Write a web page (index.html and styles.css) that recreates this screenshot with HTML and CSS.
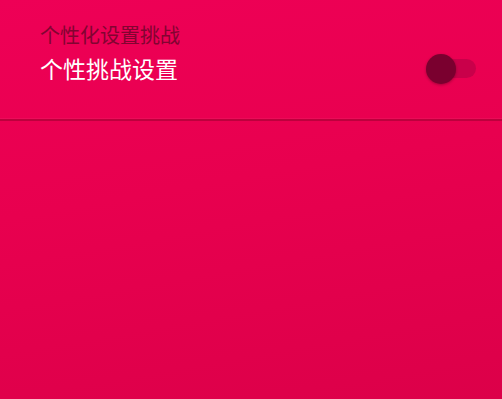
FILE: index.html
```html
<!DOCTYPE html>
<html lang="zh">
<head>
<meta charset="utf-8">
<link rel="stylesheet" href="styles.css">
</head>
<body>
<div class="page">
  <header class="header">
    <div class="texts">
      <div class="caption">个性化设置挑战</div>
      <div class="title">个性挑战设置</div>
    </div>
    <div class="switch">
      <div class="track"></div>
      <div class="thumb"></div>
    </div>
  </header>
  <div class="divider"></div>
</div>
</body>
</html>
```
FILE: styles.css
```css
html, body {
  margin: 0;
  padding: 0;
  height: 100%;
}
body {
  background: linear-gradient(170deg, #ee0056 0%, #e8004f 45%, #dc0049 100%);
  font-family: "Noto Sans CJK SC", "Noto Sans", sans-serif;
  overflow: hidden;
}
.page {
  width: 502px;
  height: 399px;
}
.header {
  display: flex;
  align-items: flex-start;
  justify-content: space-between;
  padding: 24px 26px 0 40px;
  height: 95px;
}
.texts {
  display: flex;
  flex-direction: column;
}
.caption {
  font-size: 20px;
  line-height: 22px;
  color: #820431;
}
.title {
  margin-top: 9px;
  font-size: 23px;
  line-height: 26px;
  color: #ffffff;
}
.switch {
  position: relative;
  width: 50px;
  height: 30px;
  margin-top: 30px;
}
.track {
  position: absolute;
  left: 4px;
  right: 0;
  top: 5px;
  height: 19px;
  border-radius: 10px;
  background: #c9004a;
}
.thumb {
  position: absolute;
  left: 0;
  top: 0;
  width: 30px;
  height: 30px;
  border-radius: 50%;
  background: #7a002f;
  box-shadow: 0 1px 3px rgba(0,0,0,0.3);
}
.divider {
  height: 2px;
  background: #bd003d;
  box-shadow: 0 -1px 0 rgba(255,255,255,0.05);
}
```
